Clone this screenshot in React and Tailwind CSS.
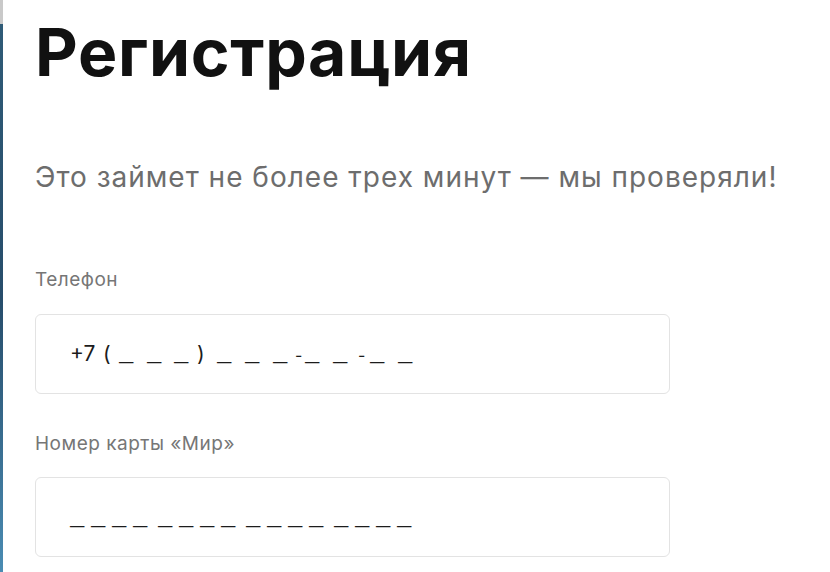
import React from 'react';

const mono = { fontFamily: '"Liberation Mono", "DejaVu Sans Mono", monospace' };

// phone mask pieces, each cell sized to the next piece's start
const phoneMask = [
  { t: '+7', w: 'w-[33px]', k: 'text' },
  { t: '(', w: 'w-[16px]', k: 'text' },
  { t: '_', w: 'w-[28px]', k: 'mask' },
  { t: '_', w: 'w-[27px]', k: 'mask' },
  { t: '_', w: 'w-[23px]', k: 'mask' },
  { t: ')', w: 'w-[20px]', k: 'text' },
  { t: '_', w: 'w-[28px]', k: 'mask' },
  { t: '_', w: 'w-[28px]', k: 'mask' },
  { t: '_', w: 'w-[22px]', k: 'mask' },
  { t: '-', w: 'w-[10px]', k: 'dash' },
  { t: '_', w: 'w-[28px]', k: 'mask' },
  { t: '_', w: 'w-[25px]', k: 'mask' },
  { t: '-', w: 'w-[12px]', k: 'dash' },
  { t: '_', w: 'w-[28px]', k: 'mask' },
  { t: '_', w: 'w-[15px]', k: 'mask' },
];

function PhoneValue() {
  return (
    <div className="flex items-baseline leading-[28px] text-[#1c1c1c]">
      {phoneMask.map((p, i) => (
        <span
          key={i}
          className={`${p.w} shrink-0 ${p.k === 'mask' ? 'text-[24px] font-bold' : p.k === 'dash' ? 'text-[16px]' : 'text-[21px]'}`}
          style={p.k === 'mask' ? mono : undefined}
        >
          {p.t}
        </span>
      ))}
    </div>
  );
}

function CardValue() {
  return (
    <div className="flex gap-[4px] pt-[3px] leading-[28px] text-[#1c1c1c]" style={mono}>
      {[0, 1, 2, 3].map((g) => (
        <span key={g} className="text-[24px] font-bold tracking-[6.6px]">____</span>
      ))}
    </div>
  );
}

function Field({ label, children, labelGap }) {
  return (
    <div className="flex flex-col">
      <label className="text-[19px] leading-[22px] text-[#767676] tracking-[0.5px]">{label}</label>
      <div className={`${labelGap} w-[635px] h-[80px] rounded-[6px] border border-[#e3e3e3] bg-white flex items-center pl-[34px]`}>
        {children}
      </div>
    </div>
  );
}

export default function App() {
  return (
    <div
      className="w-[830px] h-[572px] overflow-hidden bg-white flex"
      style={{ fontFamily: 'Inter, "Open Sans", sans-serif' }}
    >
      {/* edge of the window behind */}
      <div className="w-[3px] flex flex-col">
        <div className="h-[24px] bg-[#c9c9c9]" />
        <div className="flex-1 bg-gradient-to-b from-[#2f5b77] via-[#274d6b] to-[#4a8cb3]" />
      </div>

      <div className="flex-1 flex flex-col pl-[32px] pt-[12px]">
        <h1 className="text-[66px] leading-[80px] font-bold text-[#111] tracking-[0.7px]">Регистрация</h1>
        <p className="mt-[68px] text-[28px] leading-[34px] text-[#6d6d6d] tracking-[1px]">
          Это займет не более трех минут — мы проверяли!
        </p>
        <div className="mt-[75px]">
          <Field label="Телефон" labelGap="mt-[23px]">
            <PhoneValue />
          </Field>
        </div>
        <div className="mt-[39px]">
          <Field label="Номер карты «Мир»" labelGap="mt-[22px]">
            <CardValue />
          </Field>
        </div>
      </div>
    </div>
  );
}
